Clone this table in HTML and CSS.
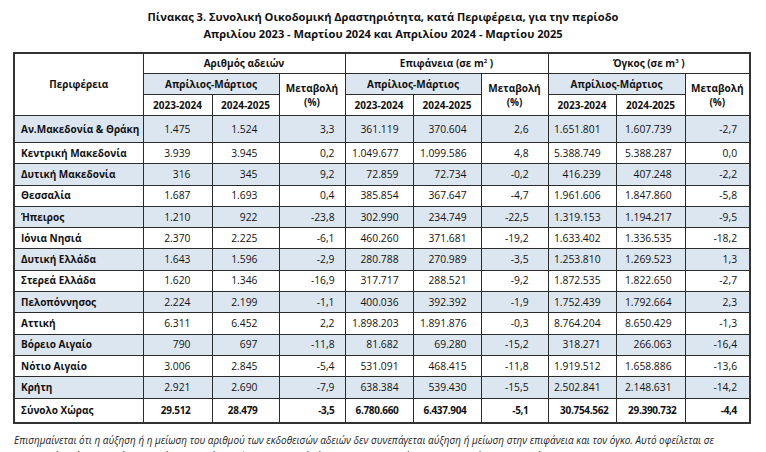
FILE: index.html
```html
<!DOCTYPE html>
<html lang="el">
<head>
<meta charset="utf-8">
<title>Πίνακας 3</title>
<link rel="stylesheet" href="styles.css">
</head>
<body>
<h1 class="title">Πίνακας 3. Συνολική Οικοδομική Δραστηριότητα, κατά Περιφέρεια, για την περίοδο<br>Απριλίου 2023 - Μαρτίου 2024 και Απριλίου 2024 - Μαρτίου 2025</h1>
<table class="stats">
<colgroup>
<col class="c-reg"><col class="c-y1"><col class="c-y2"><col class="c-ch1"><col class="c-y3"><col class="c-y4"><col class="c-ch2"><col class="c-y5"><col class="c-y6"><col class="c-ch3">
</colgroup>
<thead>
<tr class="hr1">
<th rowspan="3" class="reg-h">Περιφέρεια</th>
<th colspan="3">Αριθμός αδειών</th>
<th colspan="3">Επιφάνεια (σε m<sup>2</sup> )</th>
<th colspan="3">Όγκος (σε m<sup>3</sup> )</th>
</tr>
<tr class="hr2">
<th colspan="2" class="blue">Απρίλιος-Μάρτιος</th>
<th rowspan="2" class="chg-h">Μεταβολή<br>(%)</th>
<th colspan="2" class="blue">Απρίλιος-Μάρτιος</th>
<th rowspan="2" class="chg-h">Μεταβολή<br>(%)</th>
<th colspan="2" class="blue">Απρίλιος-Μάρτιος</th>
<th rowspan="2" class="chg-h">Μεταβολή<br>(%)</th>
</tr>
<tr class="hr3">
<th>2023-2024</th><th>2024-2025</th>
<th>2023-2024</th><th>2024-2025</th>
<th>2023-2024</th><th>2024-2025</th>
</tr>
</thead>
<tbody>
<tr class="blue first"><th>Αν.Μακεδονία &amp; Θράκη</th><td>1.475</td><td>1.524</td><td>3,3</td><td>361.119</td><td>370.604</td><td>2,6</td><td>1.651.801</td><td>1.607.739</td><td>-2,7</td></tr>
<tr><th>Κεντρική Μακεδονία</th><td>3.939</td><td>3.945</td><td>0,2</td><td>1.049.677</td><td>1.099.586</td><td>4,8</td><td>5.388.749</td><td>5.388.287</td><td>0,0</td></tr>
<tr class="blue"><th>Δυτική Μακεδονία</th><td>316</td><td>345</td><td>9,2</td><td>72.859</td><td>72.734</td><td>-0,2</td><td>416.239</td><td>407.248</td><td>-2,2</td></tr>
<tr><th>Θεσσαλία</th><td>1.687</td><td>1.693</td><td>0,4</td><td>385.854</td><td>367.647</td><td>-4,7</td><td>1.961.606</td><td>1.847.860</td><td>-5,8</td></tr>
<tr class="blue"><th>Ήπειρος</th><td>1.210</td><td>922</td><td>-23,8</td><td>302.990</td><td>234.749</td><td>-22,5</td><td>1.319.153</td><td>1.194.217</td><td>-9,5</td></tr>
<tr><th>Ιόνια Νησιά</th><td>2.370</td><td>2.225</td><td>-6,1</td><td>460.260</td><td>371.681</td><td>-19,2</td><td>1.633.402</td><td>1.336.535</td><td>-18,2</td></tr>
<tr class="blue"><th>Δυτική Ελλάδα</th><td>1.643</td><td>1.596</td><td>-2,9</td><td>280.788</td><td>270.989</td><td>-3,5</td><td>1.253.810</td><td>1.269.523</td><td>1,3</td></tr>
<tr><th>Στερεά Ελλάδα</th><td>1.620</td><td>1.346</td><td>-16,9</td><td>317.717</td><td>288.521</td><td>-9,2</td><td>1.872.535</td><td>1.822.650</td><td>-2,7</td></tr>
<tr class="blue"><th>Πελοπόννησος</th><td>2.224</td><td>2.199</td><td>-1,1</td><td>400.036</td><td>392.392</td><td>-1,9</td><td>1.752.439</td><td>1.792.664</td><td>2,3</td></tr>
<tr><th>Αττική</th><td>6.311</td><td>6.452</td><td>2,2</td><td>1.898.203</td><td>1.891.876</td><td>-0,3</td><td>8.764.204</td><td>8.650.429</td><td>-1,3</td></tr>
<tr class="blue"><th>Βόρειο Αιγαίο</th><td>790</td><td>697</td><td>-11,8</td><td>81.682</td><td>69.280</td><td>-15,2</td><td>318.271</td><td>266.063</td><td>-16,4</td></tr>
<tr><th>Νότιο Αιγαίο</th><td>3.006</td><td>2.845</td><td>-5,4</td><td>531.091</td><td>468.415</td><td>-11,8</td><td>1.919.512</td><td>1.658.886</td><td>-13,6</td></tr>
<tr class="blue"><th>Κρήτη</th><td>2.921</td><td>2.690</td><td>-7,9</td><td>638.384</td><td>539.430</td><td>-15,5</td><td>2.502.841</td><td>2.148.631</td><td>-14,2</td></tr>
<tr class="total"><th>Σύνολο Χώρας</th><td>29.512</td><td>28.479</td><td>-3,5</td><td>6.780.660</td><td>6.437.904</td><td>-5,1</td><td>30.754.562</td><td>29.390.732</td><td>-4,4</td></tr>
</tbody>
</table>
<p class="note">Επισημαίνεται ότι η αύξηση ή η μείωση του αριθμού των εκδοθεισών αδειών δεν συνεπάγεται αύξηση ή μείωση στην επιφάνεια και τον όγκο. Αυτό οφείλεται σε μεμονωμένες άδειες μεγάλης επιφάνειας και όγκου ή σε οικοδομικές άδειες που δε μεταβάλλουν την επιφάνεια και τον όγκο.</p>
</body>
</html>
```

FILE: styles.css
```css
html, body {
  margin: 0;
  padding: 0;
  background: #fff;
}
body {
  width: 766px;
  height: 452px;
  overflow: hidden;
  font-family: "Open Sans", "Noto Sans", "DejaVu Sans", sans-serif;
  color: #111;
}
.title {
  margin: 8px 0 0 0;
  font-size: 11.1px;
  font-weight: 700;
  line-height: 17px;
  text-align: center;
  color: #111;
}
.stats {
  margin: 10px 0 0 13px;
  width: 738px;
  table-layout: fixed;
  border-collapse: collapse;
  border: 2px solid #333;
  font-size: 10px;
}
.c-reg { width: 129px; }
.c-y1 { width: 69px; }
.c-y2 { width: 67px; }
.c-ch1 { width: 66px; }
.c-y3 { width: 68px; }
.c-y4 { width: 68px; }
.c-ch2 { width: 67px; }
.c-y5 { width: 68px; }
.c-y6 { width: 69px; }
.c-ch3 { width: 65px; }

.stats th, .stats td {
  border: 1px solid #2b2b2b;
  padding: 0;
  line-height: 13px;
  white-space: nowrap;
}
.stats thead th {
  font-weight: 700;
  text-align: center;
}
.stats thead .hr1 th { height: 19px; }
.stats thead .hr2 th { height: 20px; }
.stats thead .hr3 th { height: 20px; }
.stats sup {
  font-size: 6px;
  line-height: 0;
  vertical-align: 4px;
}
.stats .chg-h { line-height: 14px; }
.stats .blue, .stats tr.blue th, .stats tr.blue td { background: #dce6f1; }

.stats tbody th {
  text-align: left;
  font-weight: 700;
  padding-left: 6px;
  height: 20.3px;
}
.stats tbody td {
  text-align: right;
  font-weight: 400;
  font-size: 10.3px;
}
.stats tbody tr.first th, .stats tbody tr.first td { height: 26px; }
.stats tbody tr.total th, .stats tbody tr.total td {
  height: 23px;
  font-weight: 700;
}
.stats tbody tr.total td {
  font-size: 10px;
  letter-spacing: -0.3px;
}
.stats tbody td:nth-child(2) { padding-right: 21px; }
.stats tbody td:nth-child(3) { padding-right: 21px; }
.stats tbody td:nth-child(4) { padding-right: 10px; }
.stats tbody td:nth-child(5) { padding-right: 14px; }
.stats tbody td:nth-child(6) { padding-right: 14px; }
.stats tbody td:nth-child(7) { padding-right: 19px; }
.stats tbody td:nth-child(8) { padding-right: 15px; }
.stats tbody td:nth-child(9) { padding-right: 13px; }
.stats tbody td:nth-child(10) { padding-right: 12px; }
.stats tbody tr.total td:nth-child(8) { padding-right: 7px; }
.stats tbody tr.total td:nth-child(9) { padding-right: 8px; }

.note {
  margin: 8px 0 0 14px;
  width: 728px;
  font-size: 9.95px;
  font-style: italic;
  line-height: 16px;
  color: #222;
}
```
